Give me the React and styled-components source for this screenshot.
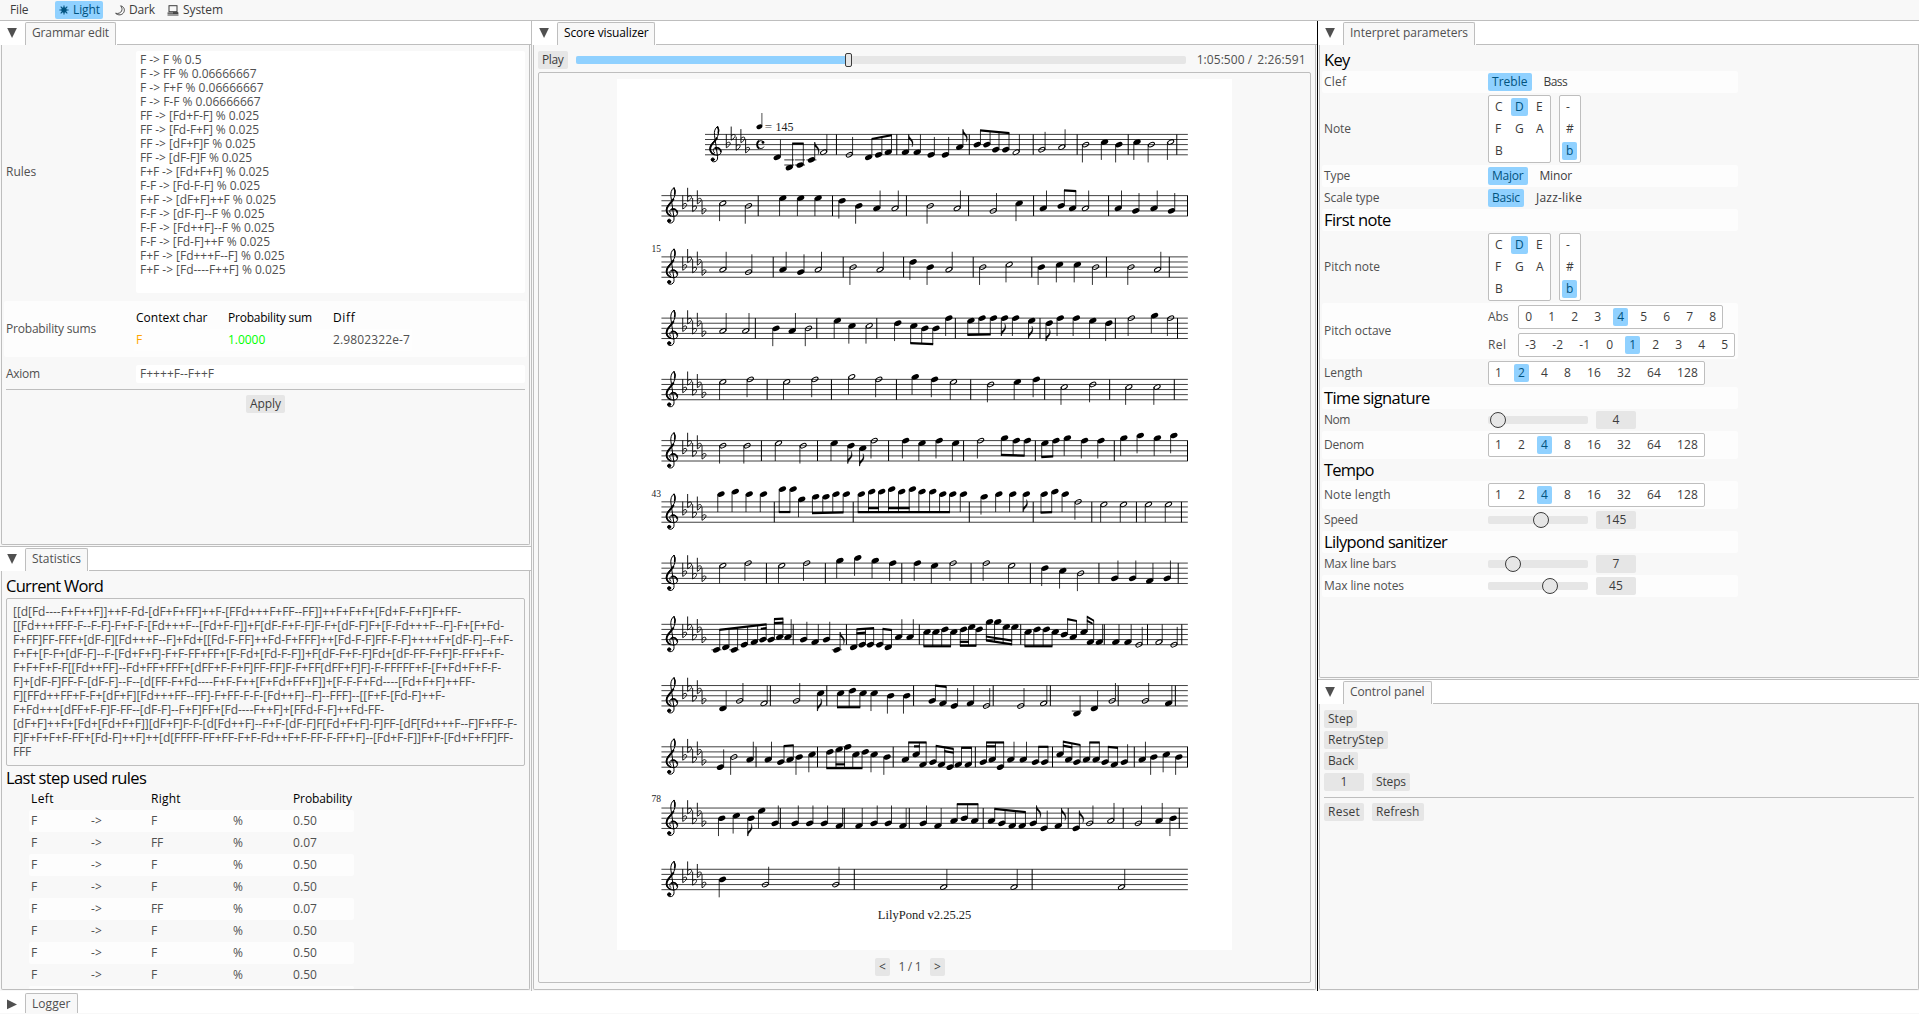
import React, { useLayoutEffect, useRef, useState } from 'react';
import styled, { createGlobalStyle } from 'styled-components';

const color = {
  panel: '#f8f8f8',
  line: '#bebebe',
  stripe: '#fdfdfd',
  text: '#505050',
  widget: '#3c3c3c',
  button: '#e6e6e6',
  accent: '#90d1ff',
  accentText: '#005380',
};

const GlobalStyle = createGlobalStyle`
  * { box-sizing: border-box; }
  body {
    margin: 0;
    background: #fff;
    overflow: hidden;
    font-family: "Open Sans", "Noto Sans", sans-serif;
    font-size: 12px;
    line-height: 14px;
    color: ${color.text};
  }
`;

/* ---------- text ---------- */

const TextBox = styled.span`
  display: block;
  flex: none;
  width: ${(p) => p.$w}px;
  height: ${(p) => (p.$heading ? 20 : 14)}px;
  line-height: ${(p) => (p.$heading ? 20 : 14)}px;
  font-size: ${(p) => (p.$heading ? 16.5 : 12)}px;
  white-space: pre;
  color: ${(p) => p.$color || 'inherit'};
`;

const TextRun = styled.span`
  display: inline-block;
`;

/* Tracks the glyphs so that the run fills exactly the width given. */
function Text({ w, children, heading, color: c }) {
  const ref = useRef(null);
  const [spacing, setSpacing] = useState(0);
  const value = String(children);
  useLayoutEffect(() => {
    const n = value.length;
    if (n < 2) return;
    const natural = ref.current.getBoundingClientRect().width - spacing * n;
    setSpacing((w - natural) / (n - 0.5));
  }, [w, value]);
  return (
    <TextBox $w={w} $heading={heading} $color={c || (heading ? '#000' : undefined)}>
      <TextRun ref={ref} style={{ letterSpacing: spacing }}>{value}</TextRun>
    </TextBox>
  );
}

/* ---------- shell ---------- */

const Shell = styled.div`
  display: flex;
  flex-direction: column;
  width: 1919px;
  height: 1014px;
  background: ${color.panel};
`;

const MenuBar = styled.header`
  display: flex;
  align-items: center;
  flex: none;
  height: 21px;
  padding: 1px 0 1px 6px;
  border-bottom: 1px solid ${color.line};
`;

const MenuItem = styled.div`
  display: flex;
  align-items: center;
  gap: ${(p) => p.$gap || 4}px;
  height: 18px;
  margin-left: ${(p) => p.$ml || 0}px;
  padding: 0 3px 0 4px;
  border-radius: 2px;
  color: ${(p) => (p.$active ? color.accentText : color.widget)};
  background: ${(p) => (p.$active ? color.accent : 'transparent')};
`;

const Dock = styled.div`
  display: flex;
  flex: none;
  height: 970px;
`;

const Column = styled.section`
  display: flex;
  flex-direction: column;
  flex: none;
  width: ${(p) => p.$w}px;
`;

const Divider = styled.div`
  flex: none;
  width: 1px;
  background: ${(p) => p.$c};
`;

const HeaderBar = styled.div`
  display: flex;
  flex: none;
  height: 24px;
  background: #fff;
`;

const ArrowCell = styled.div`
  display: flex;
  flex: none;
  width: 25px;
  padding: 7px 0 0 7px;
`;

const Tab = styled.div`
  flex: none;
  width: ${(p) => p.$w}px;
  margin-top: 1px;
  padding: 3px 0 0 6px;
  border: 1px solid ${color.line};
  border-bottom: none;
  border-radius: 2px 2px 0 0;
  background: ${color.panel};
  color: ${(p) => (p.$focus ? '#000' : color.text)};
`;

const HeaderRest = styled.div`
  flex: 1;
  margin-left: 1px;
  border-bottom: 1px solid ${color.line};
`;

const Body = styled.div`
  display: flex;
  flex-direction: column;
  flex: none;
  height: ${(p) => p.$h}px;
  margin: 0 ${(p) => (p.$flush ? 0 : 1)}px 0 1px;
  padding: 0 4px;
  border: 1px solid ${color.line};
  border-top: none;
  border-radius: 0 0 2px 2px;
  background: ${color.panel};
  overflow: hidden;
`;

const Splitter = styled.div`
  flex: none;
  height: 1px;
  margin-top: 1px;
  background: ${color.line};
`;

const LoggerBar = styled.footer`
  display: flex;
  flex: 1;
  padding-top: 1px;
  background: #fff;
  border-bottom: 1px solid ${color.panel};
`;

function Arrow({ closed }) {
  return (
    <svg width="11" height="11" viewBox="0 0 11 11" fill={color.text}>
      <path d={closed ? 'M0 .6 L10 5.4 L0 10.2Z' : 'M.2 0 H9.9 L5.05 10Z'} />
    </svg>
  );
}

function Header({ title, textW, tabW, focus }) {
  return (
    <HeaderBar>
      <ArrowCell><Arrow /></ArrowCell>
      <Tab $w={tabW} $focus={focus}><Text w={textW}>{title}</Text></Tab>
      <HeaderRest />
    </HeaderBar>
  );
}

/* ---------- widgets ---------- */

const Chip = styled.div`
  display: flex;
  align-items: center;
  justify-content: center;
  flex: none;
  height: 18px;
  min-width: ${(p) => p.$w || 0}px;
  padding: 0 4px;
  border-radius: 2px;
  color: ${(p) => (p.$on ? color.accentText : color.widget)};
  background: ${(p) => (p.$on ? color.accent : p.$flat ? 'transparent' : color.button)};
`;

const Row = styled.div`
  display: flex;
  flex: none;
  gap: ${(p) => p.$gap ?? 8}px;
  align-items: ${(p) => p.$align || 'center'};
  justify-content: ${(p) => p.$justify || 'flex-start'};
  margin-top: ${(p) => p.$mt || 0}px;
`;

const Rule = styled.div`
  flex: none;
  height: 1px;
  margin: ${(p) => p.$m};
  background: ${color.line};
`;

/* ---------- left column ---------- */

const rules = [
  ['F -> F % 0.5', 61.5],
  ['F -> FF % 0.06666667', 116.5],
  ['F -> F+F % 0.06666667', 123.5],
  ['F -> F-F % 0.06666667', 120.5],
  ['FF -> [Fd+F-F] % 0.025', 119],
  ['FF -> [Fd-F+F] % 0.025', 119],
  ['FF -> [dF+F]F % 0.025', 115.5],
  ['FF -> [dF-F]F % 0.025', 112],
  ['F+F -> [Fd+F+F] % 0.025', 129],
  ['F-F -> [Fd-F-F] % 0.025', 120],
  ['F+F -> [dF+F]++F % 0.025', 136],
  ['F-F -> [dF-F]--F % 0.025', 124.5],
  ['F-F -> [Fd++F]--F % 0.025', 134.5],
  ['F-F -> [Fd-F]++F % 0.025', 130],
  ['F+F -> [Fd+++F--F] % 0.025', 144.5],
  ['F+F -> [Fd----F++F] % 0.025', 145.5],
];

const word = [
  ['[[d[Fd----F+F++F]]++F-Fd-[dF+F+FF]++F-[FFd+++F+FF--FF]]++F+F+F+[Fd+F-F+F]F+FF-', 448],
  ['[[Fd+++FFF-F--F-F]-F+F-F-[Fd+++F--[Fd+F-F]]+F[dF-F+F-F]F-F+[dF-F]F+[F-Fd+++F--F]-F+[F+Fd-', 491],
  ['F+FF]FF-FFF+[dF-F][Fd+++F--F]+Fd+[[Fd-F-FF]++Fd-F+FFF]++[Fd-F-F]FF-F-F]++++F+[dF-F]--F+F-', 500],
  ['F+F+[F-F+[dF-F]--F-[Fd+F+F]-F+F-FF+FF+[F-Fd+[Fd-F-F]]+F[dF-F+F-F]Fd+[dF-FF-F+F]F-FF+F+F-', 491],
  ['F+F+F+F-F[[Fd++FF]--Fd+FF+FFF+[dFF+F-F+F]FF-FF]F-F+FF[dFF+F]F]-F-FFFFF+F-[F+Fd+F+F-F-', 488],
  ['F]+[dF-F]FF-F-[dF-F]--F--[d[FF-F+Fd----F+F-F++[F+Fd+FF+F]]+[F-F-F+Fd----[Fd+F+F]++FF-', 462],
  ['F][FFd++FF+F-F+[dF+F][Fd+++FF--FF]-F+FF-F-F-[Fd++F]--F]--FFF]--[[F+F-[Fd-F]++F-', 432],
  ['F+Fd+++[dFF+F-F]F-FF--[dF-F]--F+F]FF+[Fd----F++F]+[FFd-F-F]++Fd-FF-', 371],
  ['[dF+F]++F+[Fd+[Fd+F+F]][dF+F]F-F-[d[Fd++F]--F+F-[dF-F]F[Fd+F+F]-F]FF-[dF[Fd+++F--F]F+FF-F-', 504],
  ['F]F+F+F+F-FF+[Fd-F]++F]++[d[FFFF-FF+FF-F+F-Fd++F+F-FF-F-FF+F]--[Fd+F-F]]F+F-[Fd+F+FF]FF-', 500],
  ['FFF', 18],
];

const FormRow = styled.div`
  display: grid;
  grid-template-columns: 130px 1fr;
  align-items: center;
  flex: none;
  height: ${(p) => p.$h}px;
  margin: ${(p) => p.$m || '0'};
`;

const RulesField = styled.div`
  height: 242px;
  padding: 2px 4px;
  border-radius: 2px;
  background: #fff;
`;

const LineField = styled.div`
  height: 18px;
  padding: 2px 4px;
  border-radius: 2px;
  background: #fff;
`;

const StripedForm = styled(FormRow)`
  margin: 8px -2px 8px -2px;
  padding: 0 2px;
  border-radius: 2px;
  background: ${color.stripe};
`;

const SumGrid = styled.div`
  display: grid;
  grid-template-columns: 92px 105px 86px;
  grid-template-rows: 22px 22px;
  align-items: center;
`;

const SumStripe = styled.div`
  display: grid;
  grid-column: 1 / -1;
  grid-template-columns: subgrid;
  align-items: center;
  height: 22px;
  margin: 0 7px 0 -2px;
  padding-left: 2px;
  background: #fefefe;
`;

const WordFrame = styled.div`
  flex: none;
  height: 168px;
  margin: 2px 0 2px;
  padding: 6px;
  border: 1px solid ${color.line};
  border-radius: 2px;
`;

const UsedTable = styled.div`
  display: flex;
  flex-direction: column;
  flex: none;
  width: 325px;
  margin-left: 23px;
`;

const UsedRow = styled.div`
  display: grid;
  grid-template-columns: 60px 60px 82px 60px 61px;
  align-items: center;
  flex: none;
  height: ${(p) => (p.$edge ? 3 : 22)}px;
  padding-left: 2px;
  border-radius: 2px;
  background: ${(p) => (p.$stripe ? color.stripe : 'transparent')};
`;

const used = ['F', 'FF', 'F', 'F', 'FF', 'F', 'F', 'F'];

function GrammarPanel() {
  return (
    <Body $h={500}>
      <FormRow $h={242} $m="6px 0 0">
        <Text w={30.3}>Rules</Text>
        <RulesField>
          {rules.map(([t, w]) => <Text key={t} w={w}>{t}</Text>)}
        </RulesField>
      </FormRow>
      <StripedForm $h={56}>
        <Text w={90}>Probability sums</Text>
        <SumGrid>
          <Text w={71.5} color="#000">Context char</Text>
          <Text w={84} color="#000">Probability sum</Text>
          <Text w={22} color="#000">Diff</Text>
          <SumStripe>
            <Text w={6} color="#ffa500">F</Text>
            <Text w={37.3} color="#00ff00">1.0000</Text>
            <Text w={77}>2.9802322e-7</Text>
          </SumStripe>
        </SumGrid>
      </StripedForm>
      <FormRow $h={18}>
        <Text w={34}>Axiom</Text>
        <LineField><Text w={74}>F++++F--F++F</Text></LineField>
      </FormRow>
      <Rule $m="6px 0 5px" />
      <Row $justify="center"><Chip><Text w={31}>Apply</Text></Chip></Row>
    </Body>
  );
}

function StatisticsPanel() {
  return (
    <Body $h={419}>
      <Row $mt={5}><Text w={97.5} heading>Current Word</Text></Row>
      <WordFrame>
        {word.map(([t, w]) => <Text key={t} w={w}>{t}</Text>)}
      </WordFrame>
      <Row><Text w={140.5} heading>Last step used rules</Text></Row>
      <UsedTable>
        <UsedRow>
          <Text w={22.7} color="#000">Left</Text><span />
          <Text w={29.7} color="#000">Right</Text><span />
          <Text w={59} color="#000">Probability</Text>
        </UsedRow>
        {used.map((r, i) => (
          <UsedRow key={i} $stripe={i % 2 === 0}>
            <Text w={6}>F</Text>
            <Text w={11}>{'->'}</Text>
            <Text w={r.length * 6}>{r}</Text>
            <Text w={10}>%</Text>
            <Text w={24}>{r === 'FF' ? '0.07' : '0.50'}</Text>
          </UsedRow>
        ))}
        <UsedRow $stripe $edge />
      </UsedTable>
    </Body>
  );
}

/* ---------- score ---------- */

/*
 * Score notation, one string per system:
 *   |x        bar line
 *   q/h/e x:p quarter, half, eighth at x; p counts half spaces down from the top line
 *   B x:p,x:p@y0:y1/i-j  beamed group, beam from y0 to y1, second beam over notes i..j
 */
const systems = [
  'q384:9 B418:13,448:12@3.6:3.6 e480:10 h514:7 |550 h586:8 B640:9,668:8,695:7@1.8:.3 |719 e743:7 q776:7 q815:8 q855:8 e895:5 |922 B944:4,971:4,996:6,1024:6@-1.6:-.5 h1053:7 |1101 h1125:6 h1181:5 |1224 h1248:4 q1301:3 q1341:4 |1367 q1392:3 h1432:4 h1486:3 |1503',
  'h232:3 h304:4 |331 q400:1 q450:1 q499:1 |539 q566:2 q613:4 q663:5 h714:5 |746 h813:4 h888:5 |920 h989:6 q1062:3 |1102 q1129:5 B1179:4,1211:5@-2.1:-1.8 h1247:5 |1312 q1339:5 q1388:6 q1439:5 q1488:6 |1533',
  'h232:5 h304:6 |373 q400:5 q450:6 h499:5 |569 h597:4 h672:5 |738 q765:2 q813:4 h865:5 |933 h960:4 h1034:3 |1097 q1124:4 q1175:3 q1225:3 h1276:4 |1306 h1375:4 h1449:5 |1482',
  'h232:5 h296:5 |323 q381:4 q426:5 h472:4 |495 q553:1 q594:3 h642:3 |663 q722:2 B767:3,798:4,829:4@9.8:10.2 q865:0 |883 B927:1,958:0,990:0@6.6:6.4 e1021:0 q1052:0 e1097:1 |1120 e1146:2 q1177:0 q1222:0 q1268:1 q1313:2 |1331 h1376:0 q1441:-1 h1486:0 |1505',
  'h232:1 h309:0 |356 h411:1 h490:0 |536 h593:-1 h669:0 |718 q771:-1 q825:0 h878:1 |926 h982:2 q1057:1 q1110:0 |1133 h1188:3 h1268:2 |1315 h1369:3 h1448:3 |1496',
  'h232:2 h300:2 |340 h388:1 h457:2 |497 q544:1 e591:2 e624:3 h656:0 |696 q744:0 q790:1 q838:0 q884:1 |906 h954:0 B1021:-1,1054:0,1085:0@5.6:5.9 |1107 B1134:1,1165:0@6.5:6.2 q1197:-1 q1245:0 q1291:0 |1328 q1355:-1 q1401:-2 q1449:-1 q1495:-2 |1533',
  'q227:-3 q267:-4 q306:-3 q346:-3 |376 B399:-5,429:-5@4:4 q453:-1 B492:-2,521:-2,549:-3,578:-3@4.4:4.1 |597 B620:-3,649:-4,677:-4,705:-5,733:-4,763:-5,790:-4,820:-4,848:-3,876:-3@4:4/1-2/3-5 q906:-3 |922 q964:-2 q1005:-3 q1044:-3 e1082:-3 |1101 B1132:-3,1162:-4@4.2:4 q1191:-3 h1227:0 |1265 h1299:1 h1354:1 |1390 h1424:1 h1480:1 |1516',
  'h232:1 h303:0 |354 h397:1 h467:0 |519 q560:-1 q610:-2 q659:-1 q708:0 |733 q777:0 q825:1 h877:0 |927 h970:0 h1041:1 |1093 q1134:2 q1184:3 h1234:4 |1285 q1329:6 q1379:6 q1427:7 q1476:6 |1507',
  'B214:10,240:9,264:10,292:8,320:7,344:6@2.2:0/5-5 B367:6,391:5@-2:-2.2/0-1 q414:5 |429 q458:6 q490:7 q522:6 e551:10 |578 B598:9,622:8,645:8@2:1.5/0-1 B671:8,695:9@1.8:2.3 q724:5 q756:5 |782 B804:3,829:3,854:2,879:3@8.6:8.6 B906:2,929:1,950:2@8.4:8.4/0-1 B979:-1,1002:-1,1026:1,1050:1@6.3:7.9/0-3 |1066 B1087:3,1112:2,1138:2,1163:3@8.6:8.6 B1188:4,1213:5@-2:-1.3 B1243:3,1261:7@-3:-1.4/0-0 q1286:7 |1300 q1332:7 q1366:7 h1397:8 |1421 h1453:7 h1495:8 |1517',
  'q232:9 h279:6 h347:7 |365 h438:6 e506:3 |523 B562:3,595:2,625:3@8.5:8.5 q656:3 q702:4 q747:4 |766 B818:6,848:7@0:.5 q880:8 q925:7 h970:8 |989 h1066:8 h1130:7 |1149 q1223:11 q1272:9 h1322:6 |1339 h1415:6 q1480:7 |1499',
  'q225:8 h263:4 q308:5 |325 q359:5 B394:6,420:5@-.3:-.6 q446:4 q482:3 |497 B532:2,558:1,582:0,605:3,631:2@8.4:8.4/1-2 q656:3 q692:4 |709 B743:5,773:3,792:7@-1.7:-1.7/1-1 B820:6,844:7,868:8@-.4:.8/1-2 B891:7,919:7@.4:.4 |939 B961:6,986:5,1009:8@-1.7:-1.7/0-1 q1038:5 q1073:5 B1107:6,1133:6@0:0 |1155 B1176:3,1200:5,1223:6@-2:-.7/0-1 B1250:5,1277:5@-1.7:-1.7 B1302:6,1328:7@0:.4 q1356:6 |1384 q1406:5 q1439:4 q1474:3 q1509:4 |1533',
  'q229:4 q270:3 e311:4 q341:1 q378:6 |393 q434:6 q475:6 q516:6 q558:7 |572 q613:7 q655:6 q695:6 q736:7 |754 q793:6 q834:7 B879:5,908:4,937:5@-1.5:-1.5 |961 B984:5,1013:6,1042:7,1070:7@.3:1.6 e1101:6 q1131:8 e1171:7 |1199 e1221:8 h1259:6 h1318:5 |1353 h1395:6 q1453:5 q1493:4 |1510',
  'q231:4 h351:6 h548:6 |600 h850:7 h1047:7 |1098 h1348:7',
];

const HALF = 2.55;
const px = (u) => 23 + u / 2.8;

function Head({ x, y, hollow }) {
  return hollow ? (
    <ellipse cx={x} cy={y} rx="3.3" ry="1.9" transform={`rotate(-28 ${x} ${y})`} fill="none" stroke="#000" strokeWidth="1" />
  ) : (
    <ellipse cx={x} cy={y} rx="3.8" ry="2.4" transform={`rotate(-25 ${x} ${y})`} />
  );
}

function Stem({ x, y1, y2 }) {
  return <line x1={x} x2={x} y1={y1} y2={y2} stroke="#000" strokeWidth="0.8" />;
}

function Ledgers({ x, p }) {
  const out = [];
  for (let k = 10; k <= p; k += 2) out.push(k);
  return out.map((k) => (
    <line key={k} x1={x - 5} x2={x + 5} y1={k * HALF} y2={k * HALF} stroke="#000" strokeWidth="0.8" />
  ));
}

function Note({ kind, x, p, up }) {
  const y = p * HALF;
  const sx = x + (up ? 3.3 : -3.3);
  const end = (up ? Math.min(p - 7, 4) : Math.max(p + 7, 4)) * HALF;
  const s = up ? 1 : -1;
  return (
    <g>
      <Head x={x} y={y} hollow={kind === 'h'} />
      <Stem x={sx} y1={y} y2={end} />
      <Ledgers x={x} p={p} />
      {kind === 'e' && (
        <path
          d={`M${sx} ${end} c.4 ${3.6 * s} 4.6 ${5 * s} 4.4 ${8.5 * s} c0 ${1.6 * s} -.5 ${3 * s} -1 ${4 * s} c1 ${-5 * s} -1.2 ${-6.4 * s} -3.4 ${-8 * s}z`}
          stroke="#000"
          strokeWidth="0.3"
        />
      )}
    </g>
  );
}

function Beam({ spec }) {
  const [notesPart, rest] = spec.split('@');
  const [ends, ...subs] = rest.split('/');
  const notes = notesPart.split(',').map((n) => {
    const [u, p] = n.split(':').map(Number);
    return { x: px(u), p };
  });
  const [a, b] = ends.split(':').map(Number);
  const up = a < notes[0].p;
  const s = up ? 1 : -1;
  const stems = notes.map((n) => n.x + 3.3 * s);
  const x0 = stems[0];
  const x1 = stems[stems.length - 1];
  const at = (x) => (a + ((b - a) * (x - x0)) / (x1 - x0)) * HALF;
  const bar = (l, r, off) =>
    `M${l - 0.4} ${at(l) + off - 1.1} L${r + 0.4} ${at(r) + off - 1.1} V${at(r) + off + 1.1} L${l - 0.4} ${at(l) + off + 1.1}Z`;
  return (
    <g>
      {notes.map((n, i) => (
        <g key={i}>
          <Head x={n.x} y={n.p * HALF} />
          <Stem x={stems[i]} y1={n.p * HALF} y2={at(stems[i])} />
          <Ledgers x={n.x} p={n.p} />
        </g>
      ))}
      <path d={bar(x0, x1, 0)} />
      {subs.map((t) => {
        const [i, j] = t.split('-').map(Number);
        const l = i === j && i > 0 ? stems[i] - 5 : stems[i];
        const r = i === j && i === 0 ? stems[i] + 5 : stems[j];
        return <path key={t} d={bar(l, r, 3.9 * s)} />;
      })}
    </g>
  );
}

function Clef() {
  return (
    <g fill="none" stroke="#000" strokeLinecap="round" strokeLinejoin="round">
      <path
        strokeWidth="1"
        d="M9.6 18.4C7.4 17 8 13.4 11 13C14 12.7 16.5 14.9 16.2 17.6C15.9 20.4 12.6 21.4 9.8 20.5C6 19.3 3.9 15.6 5.4 11.6C6.8 8 10.8 5.6 12.6 2C14 -1 13.9 -5.2 12.6 -8C9.9 -6 9 -3 9.5 1L12.6 22.4C13.1 25.8 10.8 27.7 8.4 27.4C6.9 27.2 6 26.2 6.2 25"
      />
      <path strokeWidth="1.8" d="M9 20C5.6 18.6 4.4 15.3 5.7 12.2C6.9 9.2 10.2 6.8 12 3.6" />
      <path strokeWidth="1.5" d="M10.2 14C12.8 12.6 15.6 14.4 15.7 17M13.2 -1.5C13.8 -3.5 13.5 -6 12.6 -7.4" />
      <circle cx="7.8" cy="25" r="1.5" fill="#000" />
    </g>
  );
}

function Flat({ x, p }) {
  const y = p * HALF;
  return (
    <path
      d={`M${x} ${y - 10.4}V${y + 3.2}C${x + 2.6} ${y + 1.6} ${x + 4.2} ${y} ${x + 3.9} ${y - 1.6}C${x + 3.5} ${y - 3} ${x + 1.4} ${y - 2.6} ${x} ${y - 1}`}
      fill="none"
      stroke="#000"
      strokeWidth="0.9"
    />
  );
}

const keyFlats = [[21.3, 4], [26.2, 1], [31.2, 5], [35.9, 2], [40.6, 6]];

function System({ code, index }) {
  const left = px(index === 0 ? 182 : 60);
  const right = px(1534);
  return (
    <g transform={`translate(0 ${55.4 + index * 61.24})`}>
      {[0, 2, 4, 6, 8].map((p) => (
        <line key={p} x1={left} x2={right} y1={p * HALF} y2={p * HALF} stroke="#000" strokeWidth="0.75" />
      ))}
      <g transform={`translate(${left} 0)`}>
        <Clef />
        {keyFlats.map(([x, p]) => <Flat key={x} x={x} p={p} />)}
        {index === 0 && (
          <g>
            <path d="M58.6 7.8C57.6 5.8 52.4 5.2 52.4 10.2C52.4 15 57.6 15 59 12.2" fill="none" stroke="#000" strokeWidth="1" />
            <path d="M54.2 6.4C51.4 7.6 51.4 12.8 54.2 14" fill="none" stroke="#000" strokeWidth="1.8" />
            <circle cx="58" cy="8" r="1.4" />
          </g>
        )}
      </g>
      {code.split(' ').map((t) => {
        if (t[0] === '|') {
          const x = px(Number(t.slice(1)));
          return <line key={t} x1={x} x2={x} y1="0" y2={8 * HALF} stroke="#000" strokeWidth="1" />;
        }
        if (t[0] === 'B') return <Beam key={t} spec={t.slice(1)} />;
        const [u, p] = t.slice(1).split(':').map(Number);
        return <Note key={t} kind={t[0]} x={px(u)} p={p} up={p >= 5} />;
      })}
    </g>
  );
}

const Mark = styled.text`
  font-family: "Liberation Serif", serif;
  font-size: ${(p) => p.$size}px;
  fill: ${(p) => p.$fill || '#222'};
`;

const Page = styled.div`
  flex: none;
  width: 615px;
  height: 871px;
  background: #fff;
`;

const Sheet = styled.svg`
  display: block;
`;

function Score() {
  return (
    <Page>
      <Sheet width="615" height="871" viewBox="0 0 615 871">
        {systems.map((s, i) => <System key={i} code={s} index={i} />)}
        <ellipse cx="142.4" cy="47.7" rx="3.1" ry="2.2" transform="rotate(-25 142.4 47.7)" />
        <line x1="144.9" x2="144.9" y1="47" y2="34" stroke="#000" strokeWidth="0.7" />
        <Mark $size={13} $fill="#555" x="147.8" y="52">=</Mark>
        <Mark $size={12} x="158.5" y="51.8">145</Mark>
        <Mark $size={9.5} x="34.4" y="172.9">15</Mark>
        <Mark $size={9.5} x="34.4" y="417.8">43</Mark>
        <Mark $size={9.5} x="34.4" y="723.3">78</Mark>
        <Mark $size={12.5} x="260.8" y="840" textLength="93.5">LilyPond v2.25.25</Mark>
      </Sheet>
    </Page>
  );
}

const PlayBar = styled.div`
  display: flex;
  align-items: center;
  flex: none;
  height: 18px;
  margin-top: 6px;
`;

const Track = styled.div`
  display: flex;
  align-items: center;
  flex: none;
  width: 610px;
  height: 8px;
  margin: 0 11px 0 8px;
  border-radius: 2px;
  background: ${color.button};
`;

const TrackFill = styled.div`
  width: 269px;
  height: 8px;
  border-radius: 2px 0 0 2px;
  background: ${color.accent};
`;

const TrackHandle = styled.div`
  width: 7px;
  height: 14px;
  border: 1px solid ${color.widget};
  border-radius: 2px;
  background: ${color.button};
`;

const ScoreFrame = styled.div`
  display: flex;
  flex-direction: column;
  align-items: center;
  flex: none;
  height: 911px;
  margin-top: 3px;
  padding-top: 6px;
  border: 1px solid ${color.line};
  border-radius: 2px;
`;

const Pager = styled.nav`
  display: flex;
  align-items: center;
  gap: 8.5px;
  margin-top: 8px;
  padding-right: 29px;
`;

function ScorePanel() {
  return (
    <Body $h={945}>
      <PlayBar>
        <Chip><Text w={21.7}>Play</Text></Chip>
        <Track><TrackFill /><TrackHandle /></Track>
        <Row $gap={5}>
          <Text w={55.5}>1:05:500 /</Text>
          <Text w={48.5}>2:26:591</Text>
        </Row>
      </PlayBar>
      <ScoreFrame>
        <Score />
        <Pager>
          <Chip><Text w={7}>{'<'}</Text></Chip>
          <Text w={23}>1 / 1</Text>
          <Chip><Text w={7}>{'>'}</Text></Chip>
        </Pager>
      </ScoreFrame>
    </Body>
  );
}

/* ---------- right column ---------- */

const ParamTable = styled.div`
  display: flex;
  flex-direction: column;
  flex: none;
  width: 416px;
  margin: 4px 0 0 -2px;
`;

const ParamRow = styled.div`
  display: grid;
  grid-template-columns: 164px 1fr;
  align-items: center;
  height: ${(p) => p.$h || 22}px;
  padding-left: 2px;
  border-radius: 2px;
  background: ${(p) => (p.$stripe ? color.stripe : 'transparent')};
`;

const Frame = styled.div`
  display: flex;
  flex: none;
  gap: 8px;
  width: max-content;
  padding: 2px;
  border: 1px solid ${color.line};
  border-radius: 2px;
  background: #fff;
`;

const PitchGrid = styled(Frame)`
  display: grid;
  grid-template-columns: ${(p) => p.$cols};
  justify-items: start;
  gap: 4px 0;
`;

const Options = styled.div`
  display: flex;
  flex-direction: column;
  gap: 4px;
`;

const Rail = styled.div`
  display: flex;
  align-items: center;
  flex: none;
  width: 100px;
  height: 8px;
  padding-left: ${(p) => p.$at}px;
  border-radius: 2px;
  background: ${color.button};
`;

const Knob = styled.div`
  flex: none;
  width: 16.4px;
  height: 16.4px;
  border: 1px solid ${color.widget};
  border-radius: 50%;
  background: ${color.button};
`;

function Opt({ w, on, children }) {
  return <Chip $flat $on={on}><Text w={w}>{children}</Text></Chip>;
}

function Strip({ values, on }) {
  return (
    <Frame>
      {values.map((v) => (
        <Opt key={v} on={v === on} w={v[0] === '-' ? 11 : v.length * 7}>{v}</Opt>
      ))}
    </Frame>
  );
}

function NotePicker() {
  return (
    <Row>
      <PitchGrid $cols="20px 21px 16px">
        {[['C', 7.6], ['D', 8.6, true], ['E', 6.8], ['F', 6.2], ['G', 8.2], ['A', 8], ['B', 7.6]].map(([n, w, on]) => (
          <Opt key={n} w={w} on={on}>{n}</Opt>
        ))}
      </PitchGrid>
      <PitchGrid $cols="16px">
        <Opt w={4}>-</Opt>
        <Opt w={8}>#</Opt>
        <Opt w={7} on>b</Opt>
      </PitchGrid>
    </Row>
  );
}

function ValueSlider({ at, value }) {
  return (
    <Row>
      <Rail $at={at}><Knob /></Rail>
      <Chip $w={40}><Text w={value.length * 7}>{value}</Text></Chip>
    </Row>
  );
}

const lengths = ['1', '2', '4', '8', '16', '32', '64', '128'];

function ParamsPanel() {
  const params = [
    ['Key', 26, true],
    ['Clef', 22.3, false, 22, <Row><Opt w={35.5} on>Treble</Opt><Opt w={24}>Bass</Opt></Row>],
    ['Note', 27, false, 72, <NotePicker />],
    ['Type', 26.3, false, 22, <Row><Opt w={31.5} on>Major</Opt><Opt w={32.5}>Minor</Opt></Row>],
    ['Scale type', 55.5, false, 22, <Row><Opt w={28} on>Basic</Opt><Opt w={46}>Jazz-like</Opt></Row>],
    ['First note', 67, true],
    ['Pitch note', 56, false, 72, <NotePicker />],
    ['Pitch octave', 67.3, false, 56, (
      <Options>
        <Row $gap={10}><Text w={20.3}>Abs</Text><Strip values={['0', '1', '2', '3', '4', '5', '6', '7', '8']} on="4" /></Row>
        <Row $gap={12}><Text w={18.3}>Rel</Text><Strip values={['-3', '-2', '-1', '0', '1', '2', '3', '4', '5']} on="1" /></Row>
      </Options>
    )],
    ['Length', 38.6, false, 28, <Strip values={lengths} on="2" />],
    ['Time signature', 106, true],
    ['Nom', 26, false, 22, <ValueSlider at={1.8} value="4" />],
    ['Denom', 40, false, 28, <Strip values={lengths} on="4" />],
    ['Tempo', 50, true],
    ['Note length', 66.6, false, 28, <Strip values={lengths} on="4" />],
    ['Speed', 34, false, 22, <ValueSlider at={44.5} value="145" />],
    ['Lilypond sanitizer', 123.5, true],
    ['Max line bars', 72, false, 22, <ValueSlider at={16.7} value="7" />],
    ['Max line notes', 80, false, 22, <ValueSlider at={53.5} value="45" />],
  ];
  return (
    <Body $h={633} $flush>
      <ParamTable>
        {params.map(([label, w, heading, h, control], i) => (
          <ParamRow key={label} $h={h} $stripe={i % 2 === 1}>
            <Text w={w} heading={heading}>{label}</Text>
            {control}
          </ParamRow>
        ))}
      </ParamTable>
    </Body>
  );
}

const ControlStack = styled.div`
  display: flex;
  flex-direction: column;
  gap: 3px;
  padding-top: 6px;
`;

function ControlPanel() {
  return (
    <Body $h={286} $flush>
      <ControlStack>
        <Row><Chip><Text w={25}>Step</Text></Chip></Row>
        <Row><Chip><Text w={56}>RetryStep</Text></Chip></Row>
        <Row><Chip><Text w={26}>Back</Text></Chip></Row>
        <Row><Chip $w={40}><Text w={7}>1</Text></Chip><Chip><Text w={30}>Steps</Text></Chip></Row>
      </ControlStack>
      <Rule $m="6px 0 5px" />
      <Row><Chip><Text w={32}>Reset</Text></Chip><Chip><Text w={43.5}>Refresh</Text></Chip></Row>
    </Body>
  );
}

/* ---------- icons ---------- */

function SunIcon() {
  return (
    <svg width="10" height="10" viewBox="0 0 10 10" stroke="currentColor" strokeWidth="1.1">
      <path d="M5 .4V9.6M.4 5H9.6M1.7 1.7L8.3 8.3M8.3 1.7L1.7 8.3" />
      <circle cx="5" cy="5" r="2.1" fill="currentColor" />
    </svg>
  );
}

function MoonIcon() {
  return (
    <svg width="10" height="11" viewBox="0 0 10 11" fill="none" stroke="currentColor" strokeWidth="0.9">
      <path d="M5.6 .8C9 1.6 10.2 4.6 8.8 7.3C7.2 10.2 3.2 10.8 .6 8.3C3.2 8.9 5.6 8 6.6 6C7.4 4.2 7 2.2 5.6 .8Z" />
    </svg>
  );
}

function LaptopIcon() {
  return (
    <svg width="12" height="11" viewBox="0 0 12 11" fill="none" stroke="currentColor">
      <rect x="2" y="0.7" width="8" height="6" />
      <path d="M0.5 8.2H11.5M0.5 10H11.5" strokeWidth="1.2" />
      <path d="M6 8H11" strokeWidth="1.6" />
    </svg>
  );
}

export default function App() {
  return (
    <>
      <GlobalStyle />
      <Shell>
        <MenuBar>
          <MenuItem><Text w={18.5}>File</Text></MenuItem>
          <MenuItem $active $ml={23.5}><SunIcon /><Text w={27}>Light</Text></MenuItem>
          <MenuItem $ml={8}><MoonIcon /><Text w={26}>Dark</Text></MenuItem>
          <MenuItem $ml={5}><LaptopIcon /><Text w={40}>System</Text></MenuItem>
        </MenuBar>
        <Dock>
          <Column $w={531}>
            <Header title="Grammar edit" textW={77} tabW={91} />
            <GrammarPanel />
            <Splitter />
            <Header title="Statistics" textW={49} tabW={63} />
            <StatisticsPanel />
          </Column>
          <Divider $c={color.line} />
          <Column $w={785}>
            <Header title="Score visualizer" textW={84.7} tabW={98} focus />
            <ScorePanel />
          </Column>
          <Divider $c="#000" />
          <Column $w={601}>
            <Header title="Interpret parameters" textW={118} tabW={132} />
            <ParamsPanel />
            <Splitter />
            <Header title="Control panel" textW={74.6} tabW={89} />
            <ControlPanel />
          </Column>
        </Dock>
        <LoggerBar>
          <ArrowCell><Arrow closed /></ArrowCell>
          <Tab $w={53}><Text w={38.5}>Logger</Text></Tab>
        </LoggerBar>
      </Shell>
    </>
  );
}
